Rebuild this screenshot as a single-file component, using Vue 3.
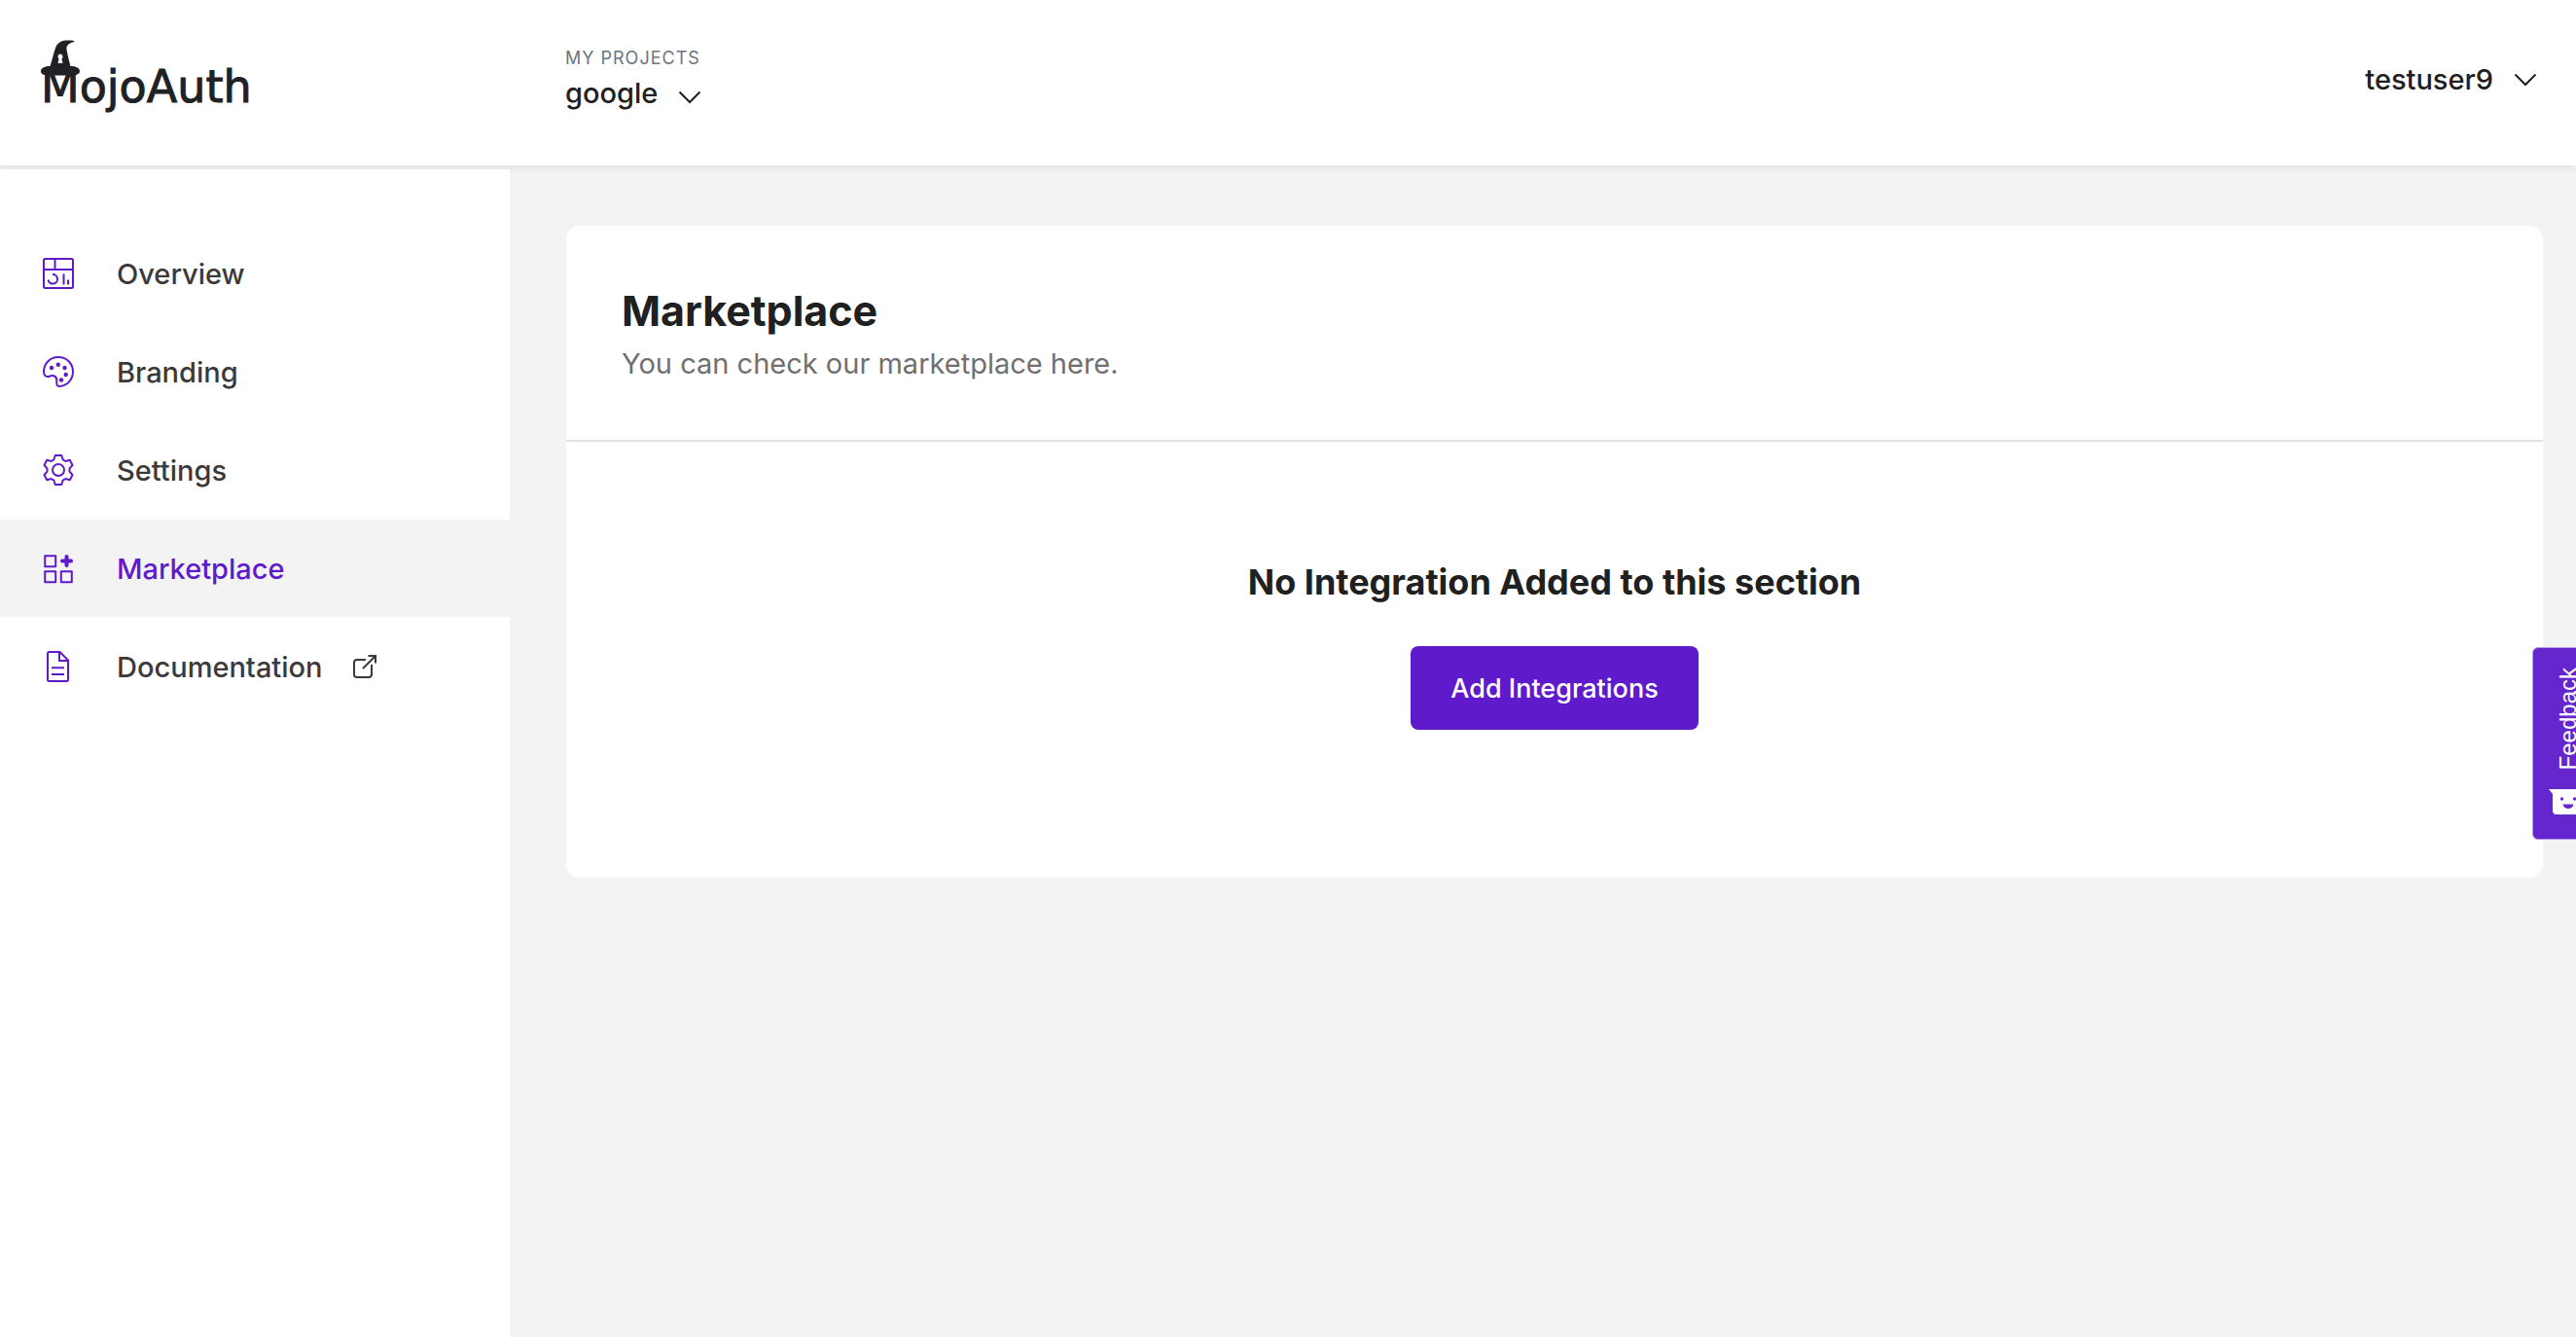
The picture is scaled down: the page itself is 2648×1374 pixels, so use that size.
<script setup>
const navItems = [
  { id: 'overview', label: 'Overview' },
  { id: 'branding', label: 'Branding' },
  { id: 'settings', label: 'Settings' },
  { id: 'marketplace', label: 'Marketplace', active: true },
  { id: 'documentation', label: 'Documentation', external: true },
]
</script>

<template>
  <div class="page">
    <header class="topbar">
      <a class="brand" href="#" aria-label="MojoAuth">
        <svg class="logo" width="220" height="90" viewBox="0 0 220 90">
          <text class="wordmark" x="0" y="65">MojoAuth</text>
          <path
            fill="#202124"
            fill-rule="evenodd"
            d="M9.500 28C12 21 13 14 15.500 8C18 3 22 1.500 27 1.500C30 1.500 33 1.500 34.500 2.300C34 3.500 32 3.500 30 4.500C27 6 26 8 26.500 11C27.500 17 29 22 30.500 28C36 28 40 30 40 33C40 37 34 38 30 37.500H10C5 38 0 37 0 33C0 30 4 28 9.500 28ZM20 15.500a2.800 2.800 0 0 0-1.400 5L17.500 25h5l-1.100-4.500a2.800 2.800 0 0 0-1.400-5Z"
          />
        </svg>
      </a>
      <div class="project">
        <span class="project-caption">MY PROJECTS</span>
        <button class="menu-button" type="button" aria-haspopup="listbox">
          <span>google</span>
          <svg class="chevron low" width="24" height="14" viewBox="0 0 24 14"><path d="M1.500 1.500 12 12 22.500 1.500" /></svg>
        </button>
      </div>
      <button class="menu-button user" type="button" aria-haspopup="menu">
        <span>testuser9</span>
        <svg class="chevron" width="24" height="14" viewBox="0 0 24 14"><path d="M1.500 1.500 12 12 22.500 1.500" /></svg>
      </button>
    </header>

    <div class="body">
      <nav class="sidebar" aria-label="Main">
        <a
          v-for="item in navItems"
          :key="item.id"
          href="#"
          class="nav-item"
          :class="{ active: item.active }"
          :aria-current="item.active ? 'page' : undefined"
        >
          <svg class="nav-icon" width="32" height="32" viewBox="0 0 32 32">
            <g v-if="item.id === 'overview'">
              <rect x="1" y="1" width="30" height="30" rx="1.500" />
              <path d="M1 12h30M12.500 1v11M10 17a4.800 4.800 0 1 1-4.500 5.500M21.500 16.500v11M26 22.500v5" />
            </g>
            <g v-else-if="item.id === 'branding'">
              <path d="M16 1C7 1 1 8 1 16c0 4 2.500 5.500 5 5c2.500-1 4-1.500 6-.5s2.500 3 2.300 5.500c-.2 3 0 5 2.700 5C25 30.500 31 24 31 16S25 1 16 1Z" />
              <g class="dots">
                <circle cx="9" cy="12" r="2.200" /><circle cx="15.800" cy="8.800" r="2.200" />
                <circle cx="22.500" cy="12" r="2.200" /><circle cx="23.700" cy="19" r="2.200" />
                <circle cx="19" cy="24.500" r="2.200" />
              </g>
            </g>
            <g v-else-if="item.id === 'settings'">
              <circle cx="16" cy="16" r="6" />
              <path d="M12.700 1h6.600l1.300 4.300 2.800 1.700 4.400-1.200L30.500 11l-3 3.400v3.200l3 3.400-2.700 5.200-4.400-1.200-2.800 1.700L19.300 31h-6.600l-1.300-4.300-2.800-1.700-4.400 1.200L1.500 21l3-3.400v-3.200l-3-3.400 2.700-5.200L8.600 7l2.800-1.700Z" />
            </g>
            <g v-else-if="item.id === 'marketplace'">
              <path d="M2.200 3.200h11v11h-11ZM2.200 19.200h11v11h-11ZM18.800 19.200h11v11h-11Z" />
              <path class="plus" d="M24.500 4v9M20 8.500h9" />
            </g>
            <g v-else>
              <path d="M16.500 1H6.500Q5 1 5 2.500v27Q5 31 6.500 31h18q1.500 0 1.500-1.500V9.500L17.500 1ZM17 1.500V10h8.500M9 17.200h13M9 24h13" />
            </g>
          </svg>
          <span>{{ item.label }}</span>
          <svg v-if="item.external" class="external" width="24" height="24" viewBox="0 0 24 24">
            <path d="M13 5H4Q1 5 1 8v12q0 3 3 3h12q3 0 3-3v-10M10 14 22.500 1.500M15.500 1H23v7.500" />
          </svg>
        </a>
      </nav>

      <main class="content">
        <section class="card">
          <div class="card-head">
            <h1>Marketplace</h1>
            <p>You can check our marketplace here.</p>
          </div>
          <div class="empty">
            <h2>No Integration Added to this section</h2>
            <button class="primary" type="button">Add Integrations</button>
          </div>
        </section>
      </main>
    </div>

    <button class="feedback" type="button">
      <span class="feedback-label">Feedback</span>
      <svg class="feedback-icon" width="38" height="28" viewBox="0 0 38 28">
        <path fill="#fff" d="M0 0h36v23q0 3-3 3H8q-4 0-4-4V5Z" />
        <circle cx="13.500" cy="10" r="1.700" /><circle cx="26.500" cy="10" r="1.700" />
        <path d="M14.500 15.500h11c-1 6-10 6-11 0Z" />
      </svg>
    </button>
  </div>
</template>

<style>
body {
  margin: 0;
}
</style>

<style scoped>
.page {
  position: relative;
  display: flex;
  flex-direction: column;
  min-height: 100vh;
  overflow: hidden;
  background: #f3f3f3;
  color: #202020;
  font-family: Inter, "Liberation Sans", sans-serif;
  font-optical-sizing: none;
}
button {
  margin: 0;
  border: 0;
  font-family: inherit;
  cursor: pointer;
}
a {
  color: inherit;
  text-decoration: none;
}
.topbar {
  display: flex;
  align-items: flex-start;
  box-sizing: border-box;
  height: 170px;
  padding: 40px 40px 0 42px;
  background: #fff;
  box-shadow: 0 4px 6px rgba(0, 0, 0, 0.06);
}
.brand {
  width: 539px;
}
.logo {
  display: block;
  overflow: visible;
}
.wordmark {
  font-family: "DejaVu Sans", sans-serif;
  font-size: 46px;
  fill: #202124;
  stroke: #202124;
  stroke-width: 1px;
}
.project {
  display: flex;
  flex-direction: column;
  gap: 8px;
  padding-top: 8px;
}
.project-caption {
  color: #6c757d;
  font-size: 18px;
  line-height: 24px;
  letter-spacing: 1px;
}
.menu-button {
  display: flex;
  align-items: center;
  gap: 21px;
  padding: 0;
  background: none;
  color: #202020;
  font-size: 29px;
  font-weight: 500;
  line-height: 32px;
}
.user {
  margin: 26px 0 0 auto;
}
.chevron {
  fill: none;
  stroke: #202020;
  stroke-width: 2;
}
.low {
  margin-top: 8px;
}
.body {
  display: flex;
  flex: 1;
}
.sidebar {
  position: relative;
  display: flex;
  flex-direction: column;
  gap: 1px;
  flex: 0 0 524px;
  margin-top: 4px;
  padding-top: 57px;
  background: #fff;
}
.nav-item {
  display: flex;
  align-items: center;
  box-sizing: border-box;
  height: 100px;
  padding-left: 44px;
  color: #3a3a3a;
  font-size: 29px;
  font-weight: 500;
}
.nav-item.active {
  background: #f3f3f3;
  color: #5f1bcb;
}
.nav-icon {
  margin-right: 44px;
  fill: none;
  stroke: #5f1bcb;
  stroke-width: 2;
  stroke-linejoin: round;
}
.dots {
  fill: #5f1bcb;
  stroke: none;
}
.plus {
  stroke-width: 4;
  stroke-linecap: round;
}
.external {
  margin-left: 32px;
  fill: none;
  stroke: #3a3a3a;
  stroke-width: 2;
}
.content {
  flex: 1;
  padding: 62px 34px 62px 58px;
}
.card {
  position: relative;
  border-radius: 14px;
  background: #fff;
}
.card-head {
  padding: 60px 57px 57px;
  border-bottom: 2px solid #dee2e6;
}
h1 {
  margin: 0;
  font-size: 43px;
  font-weight: 700;
  line-height: 54px;
}
p {
  margin: 7px 0 0;
  color: #707070;
  font-size: 29px;
  line-height: 42px;
}
.empty {
  display: flex;
  flex-direction: column;
  align-items: center;
  gap: 42px;
  padding: 120px 40px 152px;
}
h2 {
  margin: 0;
  font-size: 36px;
  font-weight: 700;
  line-height: 48px;
}
.primary {
  height: 86px;
  padding: 0 41px;
  border-radius: 8px;
  background: #5f1bcb;
  color: #fff;
  font-size: 27px;
  font-weight: 500;
}
.feedback {
  position: absolute;
  top: 665px;
  right: -12px;
  display: flex;
  flex-direction: column;
  align-items: flex-start;
  gap: 20px;
  box-sizing: border-box;
  width: 57px;
  height: 198px;
  padding: 20px 0 0 16px;
  border: 1px solid #b79ae6;
  border-radius: 6px;
  background: #6527cd;
  color: #fff;
}
.feedback-label {
  margin-left: 8px;
  font-family: "Liberation Sans", sans-serif;
  font-size: 24px;
  line-height: 24px;
  writing-mode: vertical-rl;
  transform: rotate(180deg);
}
.feedback-icon {
  fill: #6527cd;
}
</style>
